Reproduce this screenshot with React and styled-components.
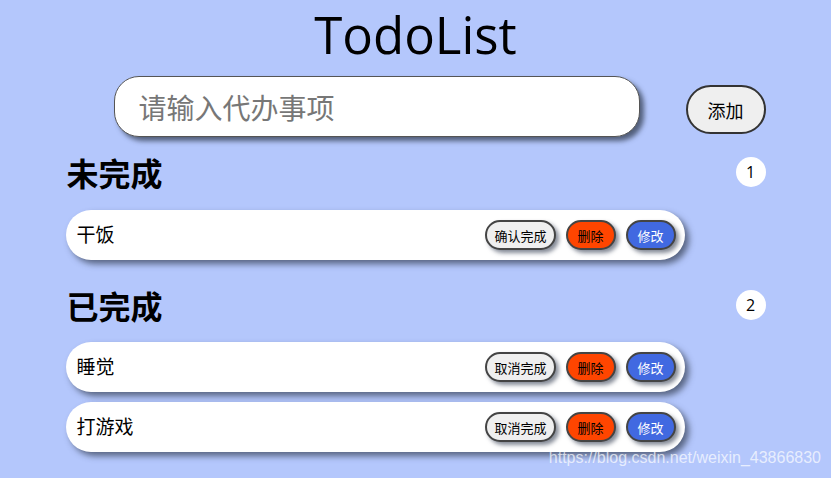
import React from "react";
import styled, { createGlobalStyle } from "styled-components";

const Global = createGlobalStyle`
  html, body { margin: 0; padding: 0; background: #b4c7fc; }
  body { font-family: "Noto Sans", "Noto Sans CJK SC", sans-serif; }
  #root { min-height: 478px; }
`;

const Page = styled.div`
  position: relative;
  width: 831px;
  height: 478px;
  overflow: hidden;
  display: flex;
  flex-direction: column;
  align-items: center;
`;

const Title = styled.h1`
  margin: 0;
  padding-top: 1px;
  font-size: 51px;
  font-weight: 400;
  line-height: 66px;
  height: 65px;
  color: #000;
  font-family: "Open Sans", "Noto Sans CJK SC", sans-serif;
`;

const Container = styled.div`
  width: 700px;
  display: flex;
  flex-direction: column;
`;

const AddBar = styled.div`
  display: flex;
  align-items: center;
  justify-content: space-between;
  padding-left: 48px;
  margin-top: 10px;
`;

const Input = styled.input`
  box-sizing: border-box;
  width: 526px;
  height: 61px;
  border: 1px solid #555;
  border-radius: 25px;
  background: #fff;
  box-shadow: 4px 4px 5px rgba(50, 60, 80, 0.75);
  padding: 0 24px;
  font-size: 28px;
  font-family: "Noto Sans CJK SC", sans-serif;
  outline: none;
  &::placeholder { color: #777; }
`;

const AddButton = styled.button`
  box-sizing: border-box;
  width: 80px;
  height: 49px;
  margin-top: 6px;
  border: 2px solid #333;
  border-radius: 25px;
  background: #efefef;
  font-size: 18px;
  font-family: "Noto Sans CJK SC", sans-serif;
  color: #000;
  padding: 0;
`;

const SectionHeader = styled.div`
  display: flex;
  align-items: center;
  justify-content: space-between;
  margin-top: ${(p) => p.$top}px;
  height: 34px;
`;

const Heading = styled.h2`
  margin: 0 0 0 1px;
  font-size: 32px;
  font-weight: 700;
  font-family: "Noto Sans CJK SC", sans-serif;
  line-height: 34px;
`;

const Badge = styled.span`
  width: 30px;
  height: 30px;
  border-radius: 50%;
  background: #fff;
  display: flex;
  align-items: center;
  justify-content: center;
  font-size: 16px;
  font-family: "Open Sans", sans-serif;
`;

const List = styled.ul`
  list-style: none;
  margin: ${(p) => p.$top}px 0 0;
  padding: 0;
  display: flex;
  flex-direction: column;
  gap: 10px;
`;

const Row = styled.li`
  box-sizing: border-box;
  width: 619px;
  height: 50px;
  background: #fff;
  border-radius: 25px;
  box-shadow: 4px 4px 6px rgba(50, 60, 80, 0.7);
  display: flex;
  align-items: center;
  padding: 0 9px 0 11px;
  gap: 10px;
`;

const ItemText = styled.span`
  flex: 1;
  font-size: 19px;
  line-height: 24px;
  margin-top: -2px;
  font-family: "Noto Sans CJK SC", sans-serif;
  color: #000;
`;

const SmallButton = styled.button`
  box-sizing: border-box;
  height: 30px;
  padding: 0 ${(p) => (p.$wide ? 7 : 9)}px;
  border: 2px solid #444;
  border-radius: 15px;
  background: ${(p) => p.$bg};
  color: ${(p) => p.$fg};
  font-size: 13px;
  font-family: "Noto Sans CJK SC", sans-serif;
  box-shadow: 3px 3px 4px rgba(50, 60, 80, 0.6);
  min-width: ${(p) => (p.$wide ? 70 : 50)}px;
`;

const Watermark = styled.div`
  position: absolute;
  right: 10px;
  bottom: 11px;
  font-size: 16px;
  font-family: "Liberation Sans", Arial, sans-serif;
  color: rgba(255, 255, 255, 0.7);
`;

function Item({ text, done }) {
  return (
    <Row>
      <ItemText>{text}</ItemText>
      <SmallButton $wide $bg="#efefef" $fg="#000">
        {done ? "取消完成" : "确认完成"}
      </SmallButton>
      <SmallButton $bg="#ff4500" $fg="#000">删除</SmallButton>
      <SmallButton $bg="#4169e1" $fg="#fff">修改</SmallButton>
    </Row>
  );
}

export default function App() {
  return (
    <Page>
      <Global />
      <Title>TodoList</Title>
      <Container>
        <AddBar>
          <Input placeholder="请输入代办事项" />
          <AddButton>添加</AddButton>
        </AddBar>
        <SectionHeader $top={18}>
          <Heading>未完成</Heading>
          <Badge>1</Badge>
        </SectionHeader>
        <List $top={21}>
          <Item text="干饭" />
        </List>
        <SectionHeader $top={28}>
          <Heading>已完成</Heading>
          <Badge>2</Badge>
        </SectionHeader>
        <List $top={20}>
          <Item text="睡觉" done />
          <Item text="打游戏" done />
        </List>
      </Container>
      <Watermark>https://blog.csdn.net/weixin_43866830</Watermark>
    </Page>
  );
}
